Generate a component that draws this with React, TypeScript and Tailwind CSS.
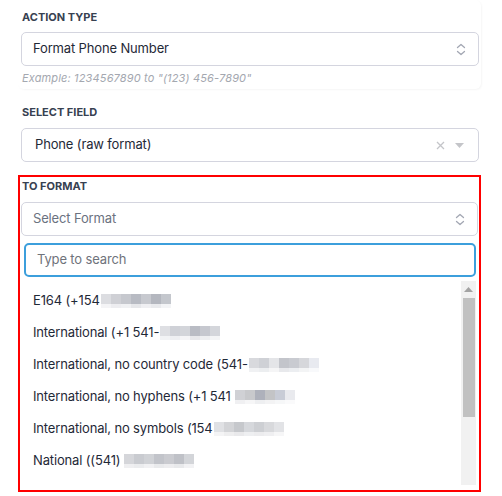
import React from "react";

const UpDown = () => (
  <svg width="10" height="13" viewBox="0 0 10 13" fill="none" stroke="#a3a7b3" strokeWidth="1.3" strokeLinecap="round" strokeLinejoin="round">
    <path d="M1.5 4.5 L5 1.5 L8.5 4.5" />
    <path d="M1.5 8.5 L5 11.5 L8.5 8.5" />
  </svg>
);

// pixelated redaction block, each cell is [top, bottom] colour
const Blur = ({ cells, spaced }: { cells: [string, string][]; spaced?: boolean }) => (
  <span className={spaced ? "inline-flex ml-[4px] align-middle" : "inline-flex ml-[1px] align-middle"}>
    {cells.map((c, i) => (
      <span key={i} className="flex flex-col w-[10px]">
        <span className="h-[10px]" style={{ background: c[0] }} />
        <span className="h-[4px]" style={{ background: c[1] }} />
      </span>
    ))}
  </span>
);

const options: { text: string; spaced?: boolean; cells: [string, string][] }[] = [
  {
    text: "E164 (+154",
    cells: [["#dcdde1", "#f4f4f6"], ["#cfd0d5", "#ededf0"], ["#c6c8ce", "#f0f1f3"], ["#b8bbc3", "#e6e7ea"], ["#c7c9cf", "#efeff2"], ["#b4b7bf", "#e9eaed"], ["#c4c7cd", "#f3f4f6"]],
  },
  {
    text: "International (+1 541-",
    cells: [["#dedfe3", "#f2f3f5"], ["#cfd1d7", "#eeeff2"], ["#d3d5da", "#f5f5f7"], ["#b9bcc4", "#e7e8eb"], ["#c6c8cf", "#eeeff1"], ["#d4d6db", "#f4f5f6"]],
  },
  {
    text: "International, no country code (541-",
    cells: [["#d8d9dd", "#f0f1f3"], ["#cfd1d6", "#eceef0"], ["#e4e5e8", "#f5f5f6"], ["#c3c5cb", "#e8e9ec"], ["#c9cbd1", "#eceef1"], ["#d6d7db", "#f3f4f5"], ["#e8eaf0", "#f8f9fb"]],
  },
  {
    text: "International, no hyphens (+1 541",
    spaced: true,
    cells: [["#d0d1d5", "#f0f0f2"], ["#c8c9cc", "#f6f6f7"], ["#aeb1bb", "#eeeff1"], ["#c3c4c6", "#f3f3f4"], ["#c8ccd6", "#f6f7f8"], ["#e9eaee", "#fafafb"]],
  },
  {
    text: "International, no symbols (154",
    cells: [["#e0e1e4", "#f4f4f5"], ["#d3d4d7", "#eeeeef"], ["#c6c8cc", "#e9e9eb"], ["#d6d8dc", "#eeeff1"], ["#cdcfd3", "#ececee"], ["#d8d9dc", "#efeff1"], ["#e2e3e6", "#f6f6f7"]],
  },
  {
    text: "National ((541)",
    spaced: true,
    cells: [["#d5d6da", "#efeff1"], ["#c9cbd0", "#ebecee"], ["#d0d2d6", "#f1f1f3"], ["#c2c4ca", "#e9eaec"], ["#cacbd0", "#ededef"], ["#bfc1c7", "#e8e9eb"], ["#d3d5d9", "#f2f2f4"]],
  },
];

export default function App() {
  return (
    <div className="w-[502px] h-[496px] bg-white overflow-hidden font-['Inter',sans-serif] text-[#1f2937]">
      <div className="ml-[18px] w-[463px]">
        {/* action type */}
        <div className="pl-[3px] pr-[2px] pt-[9px] pb-[3px] rounded-md shadow-[1px_1px_2px_rgba(0,0,0,0.04)]">
          <div className="h-[16px] text-[11px] leading-[16px] font-bold text-[#374151] pl-[1px]">ACTION TYPE</div>
          <div className="mt-[7px] h-[34px] border border-[#d4d5df] rounded-[5px] flex items-center justify-between pl-[11px] pr-[12px]">
            <span className="text-[13px] tracking-[-0.15px]">Format Phone Number</span>
            <UpDown />
          </div>
          <div className="mt-[4px] h-[16px] text-[11px] tracking-[0.15px] leading-[16px] italic text-[#a4a8b0] pl-[1px]">
            Example: 1234567890 to "(123) 456-7890"
          </div>
        </div>

        {/* select field */}
        <div className="pl-[3px] pr-[2px] pt-[15px] pb-[13px]">
          <div className="h-[16px] text-[11px] leading-[16px] font-bold text-[#374151] pl-[1px]">SELECT FIELD</div>
          <div className="mt-[8px] h-[34px] border border-[#d4d5df] rounded-[5px] flex items-center justify-between pl-[13px] pr-[14px]">
            <span className="text-[13px] tracking-[-0.15px]">Phone (raw format)</span>
            <div className="flex items-center gap-[10px]">
              <svg width="9" height="9" viewBox="0 0 9 9" stroke="#c4c5c9" strokeWidth="1.3">
                <path d="M1 1 L8 8 M8 1 L1 8" />
              </svg>
              <svg width="9" height="5" viewBox="0 0 9 5" fill="#c4c5c9">
                <path d="M0 0 H9 L4.5 5 Z" />
              </svg>
            </div>
          </div>
        </div>

        {/* to format (highlighted) */}
        <div className="h-[317px] border-2 border-[#ff0000] pl-[1px] pr-[1px]">
          <div className="h-[16px] text-[11px] leading-[16px] font-bold text-[#374151] pl-[1px] pt-[1px]">TO FORMAT</div>
          <div className="mt-[9px] h-[34px] border border-[#d4d5df] rounded-[5px] flex items-center justify-between pl-[11px] pr-[12px]">
            <span className="text-[13px] tracking-[-0.15px] text-[#6b7280]">Select Format</span>
            <UpDown />
          </div>
          <div className="mt-[7px] ml-[3px] mr-[2px] h-[34px] border-2 border-[#3c9fdc] rounded-[5px] flex items-center pl-[11px]">
            <span className="text-[13px] tracking-[-0.15px] text-[#6f737b]">Type to search</span>
          </div>
          <div className="mt-[4px] ml-[3px] mr-[2px] h-[204px] flex overflow-hidden">
            <div className="flex-1 pt-[4px] pl-[9px]">
              {options.map((o) => (
                <div key={o.text} className="h-[32px] flex items-center text-[13px] tracking-[-0.15px] whitespace-nowrap">
                  <span>{o.text}</span>
                  <Blur cells={o.cells} spaced={o.spaced} />
                </div>
              ))}
            </div>
            <div className="w-[15px] bg-[#f1f1f1] flex flex-col items-center pt-[6px]">
              <svg width="9" height="5" viewBox="0 0 9 5" fill="#a3a3a3">
                <path d="M0 5 H9 L4.5 0 Z" />
              </svg>
              <div className="mt-[6px] w-[12px] h-[119px] bg-[#c1c1c1]" />
            </div>
          </div>
        </div>
      </div>
    </div>
  );
}
